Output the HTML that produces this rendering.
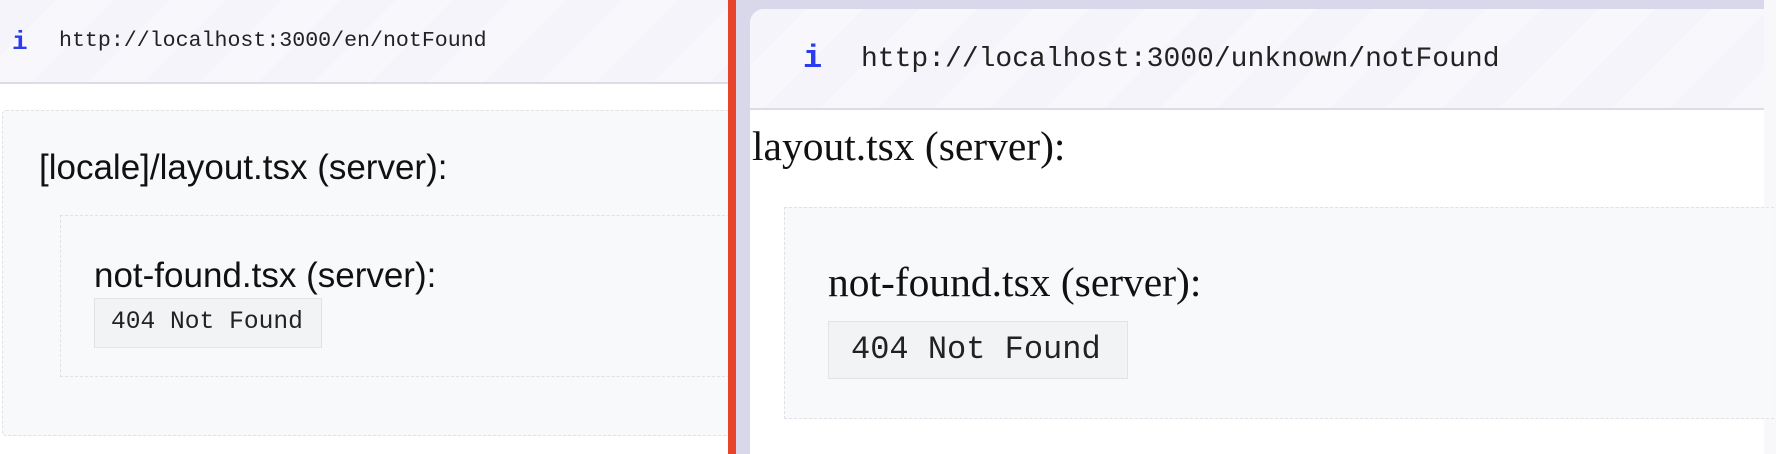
<!DOCTYPE html>
<html><head><meta charset="utf-8"><style>
*{margin:0;padding:0;box-sizing:border-box}
body{width:1776px;height:454px;overflow:hidden;background:#fff;position:relative;font-family:"Liberation Sans",sans-serif;color:#111}
.abs{position:absolute;line-height:1;white-space:nowrap}
.stripe{background:repeating-linear-gradient(135deg,#f4f4fa 0 40px,#f8f8fc 40px 80px)}
.mono{font-family:"Liberation Mono",monospace}
.i{color:#2b3cf0;font-weight:bold}
</style></head><body>
<!-- left -->
<div class="abs stripe" style="left:0;top:0;width:728px;height:84px;border-bottom:2px solid #dcdce4"></div>
<div class="abs mono i" style="left:12px;top:29px;font-size:26px">i</div>
<div class="abs mono" style="left:59px;top:31px;font-size:21.6px;color:#222">http://localhost:3000/en/notFound</div>
<div class="abs" style="left:2px;top:110px;width:740px;height:326px;border:1.5px dashed #e0e0e6;border-radius:4px;background:#f8f9fb"></div>
<div class="abs" style="left:39px;top:150px;font-size:35px">[locale]/layout.tsx (server):</div>
<div class="abs" style="left:60px;top:215px;width:690px;height:162px;border:1.5px dashed #e0e0e6;background:#f8f9fb"></div>
<div class="abs" style="left:94px;top:258px;font-size:35px">not-found.tsx (server):</div>
<div class="abs mono" style="left:94px;top:298px;width:228px;height:50px;background:#f2f3f5;border:1.5px solid #e3e3e7;font-size:24.6px;line-height:47px;padding-left:16px;color:#222">404 Not Found</div>
<!-- divider -->
<div class="abs" style="left:728px;top:0;width:8px;height:454px;background:#e8432b"></div>
<div class="abs" style="left:736px;top:0;width:1040px;height:454px;background:#d8d8ea"></div>
<div class="abs" style="left:750px;top:9px;width:1014px;height:445px;background:#fff;border-top-left-radius:14px;overflow:hidden">
 <div class="abs stripe" style="left:0;top:0;width:1014px;height:101px;border-bottom:2px solid #dcdce4"></div>
</div>
<div class="abs" style="left:1764px;top:0;width:12px;height:454px;background:#f8f8fb"></div>
<div class="abs mono i" style="left:803px;top:43px;font-size:32px">i</div>
<div class="abs mono" style="left:861px;top:46px;font-size:28px;color:#222">http://localhost:3000/unknown/notFound</div>
<div class="abs" style="left:752px;top:126px;font-size:41.5px;font-family:'Liberation Serif',serif">layout.tsx (server):</div>
<div class="abs" style="left:784px;top:207px;width:990px;height:212px;border:1.5px dashed #e0e0e6;border-right:none;background:#f8f9fb"></div>
<div class="abs" style="left:828px;top:262px;font-size:41.5px;font-family:'Liberation Serif',serif">not-found.tsx (server):</div>
<div class="abs mono" style="left:828px;top:321px;width:300px;height:58px;background:#f2f3f5;border:1.5px solid #e3e3e7;font-size:32px;line-height:55px;padding-left:22px;color:#222">404 Not Found</div>
</body></html>
